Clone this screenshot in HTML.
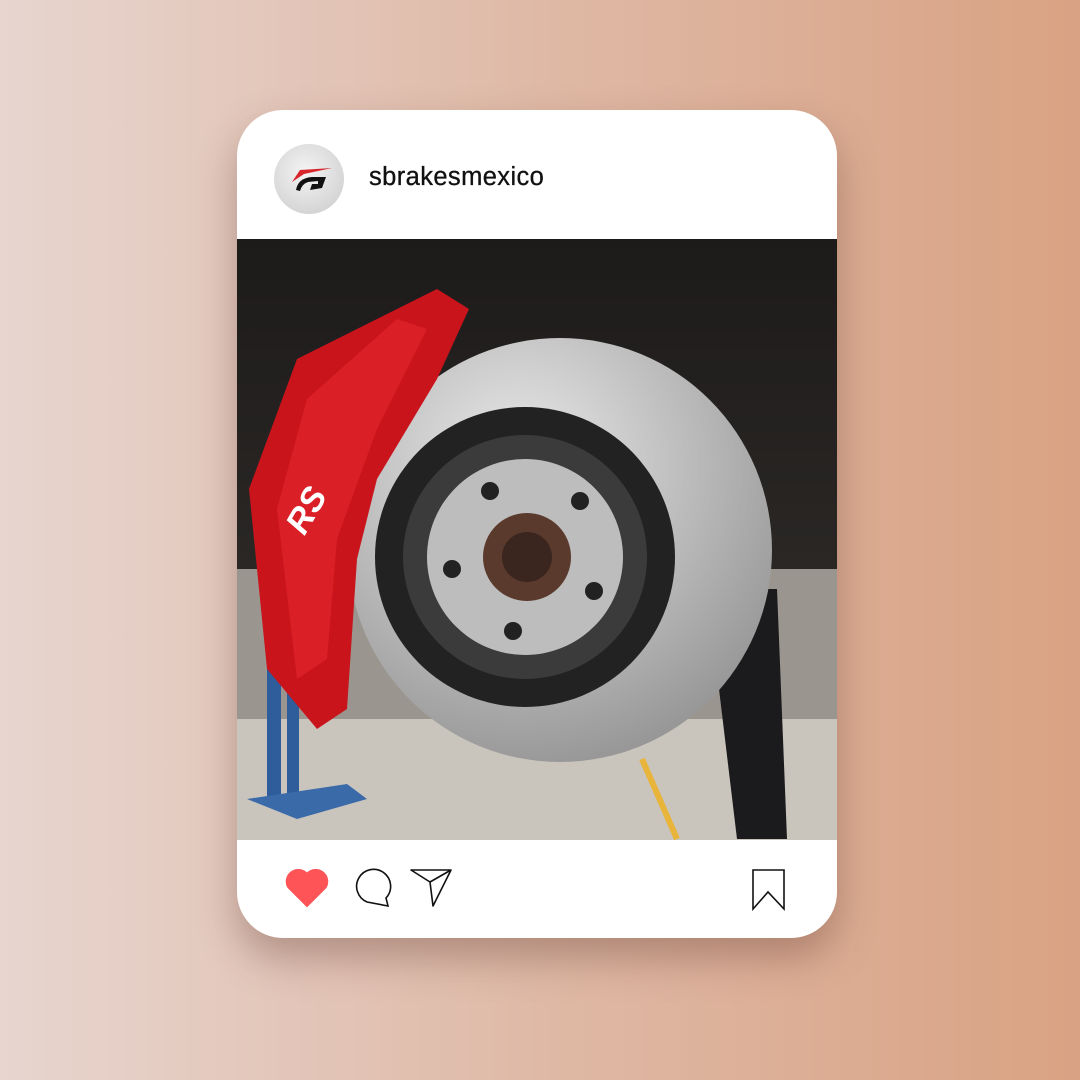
<!DOCTYPE html>
<html><head><meta charset="utf-8"><style>
*{margin:0;padding:0;box-sizing:border-box}
body{width:1080px;height:1080px;overflow:hidden;background:linear-gradient(90deg,#e7d5cf 0%,#dfb9a6 50%,#d9a283 100%);font-family:"Liberation Sans",sans-serif;position:relative}
.card{position:absolute;left:237px;top:110px;width:600px;height:828px;background:#fff;border-radius:46px;overflow:hidden;box-shadow:0 20px 40px rgba(90,50,40,.35)}
.av{position:absolute;left:37px;top:34px;width:70px;height:70px;border-radius:50%;background:radial-gradient(circle at 45% 40%,#f4f4f4,#c9c9cb)}
.name{position:absolute;left:132px;top:53px;font-size:25.5px;color:#111;letter-spacing:.4px;-webkit-text-stroke:.3px #111}
.photo{position:absolute;left:0;top:129px;width:600px;height:601px;background:linear-gradient(180deg,#1d1b1a 0%,#2a2725 55%,#6b6865 75%,#b8b4ad 100%);overflow:hidden}
</style></head><body>
<div class="card">
<div class="av"><svg width="70" height="70" viewBox="0 0 70 70"><path d="M18 38 L26 26 L58 24 L30 30 Z" fill="#d8262c"/><path d="M22 46 Q24 34 38 33 L52 33 L48 44 L36 46 L38 40 L44 40 L44 37 L34 38 Q28 40 26 47 Z" fill="#111"/></svg></div>
<div class="name">sbrakesmexico</div>
<div class="photo">
<svg width="600" height="601" viewBox="0 0 600 601">
<rect x="0" y="330" width="600" height="271" fill="#9a968f"/>
<rect x="0" y="480" width="600" height="121" fill="#c9c5bd"/>
<rect x="30" y="420" width="14" height="140" fill="#2f5c9a"/><rect x="50" y="430" width="12" height="130" fill="#2f5c9a"/>
<path d="M10 560 L110 545 L130 560 L60 580Z" fill="#3a6aa8"/>
<path d="M405 520 L440 600" stroke="#e8b43a" stroke-width="6"/>
<path d="M470 350 L540 350 L550 600 L500 600Z" fill="#1b1b1d"/>
<defs><radialGradient id="g" cx=".4" cy=".3" r=".8"><stop offset="0" stop-color="#eaeaea"/><stop offset="1" stop-color="#8e8e8e"/></radialGradient></defs>
<circle cx="323" cy="311" r="212" fill="url(#g)"/>
<circle cx="288" cy="318" r="150" fill="#222"/>
<circle cx="288" cy="318" r="122" fill="#3b3b3b"/>
<circle cx="288" cy="318" r="98" fill="#bdbdbd"/>
<circle cx="290" cy="318" r="44" fill="#5a3a2c"/>
<circle cx="290" cy="318" r="25" fill="#3a261e"/>
<g fill="#222"><circle cx="253" cy="252" r="9"/><circle cx="343" cy="262" r="9"/><circle cx="215" cy="330" r="9"/><circle cx="357" cy="352" r="9"/><circle cx="276" cy="392" r="9"/></g>
<path d="M12 250 L60 120 L200 50 L232 70 L200 140 L140 240 L120 320 L110 470 L80 490 L30 430 Z" fill="#c9141c"/>
<path d="M40 270 L70 160 L160 80 L190 90 L140 190 L100 300 L90 420 L60 440 Z" fill="#e1232b" opacity=".7"/>
<text x="40" y="290" font-family="Liberation Sans" font-weight="bold" font-style="italic" font-size="34" fill="#fff" transform="rotate(-60 60 270)">RS</text>
</svg>
</div>
<svg style="position:absolute;left:0;top:740px" width="600" height="88" viewBox="0 0 600 88">
<path d="M70 55 L56 41 A9 9 0 0 1 70 30 A9 9 0 0 1 84 41 Z" transform="scale(1.4) translate(-20 -14)" fill="#fe5457"/>
<path d="M130 52 A17 17 0 1 1 149 48 L151 56 Z" fill="none" stroke="#111" stroke-width="1.6"/>
<path d="M174 20 L214 20 L193 32 Z M193 32 L196 56 L214 20" fill="none" stroke="#111" stroke-width="1.6" stroke-linejoin="round"/>
<path d="M516 20 L547 20 L547 59 L531 42 L516 59 Z" fill="none" stroke="#111" stroke-width="1.6"/>
</svg>
</div>
</body></html>
